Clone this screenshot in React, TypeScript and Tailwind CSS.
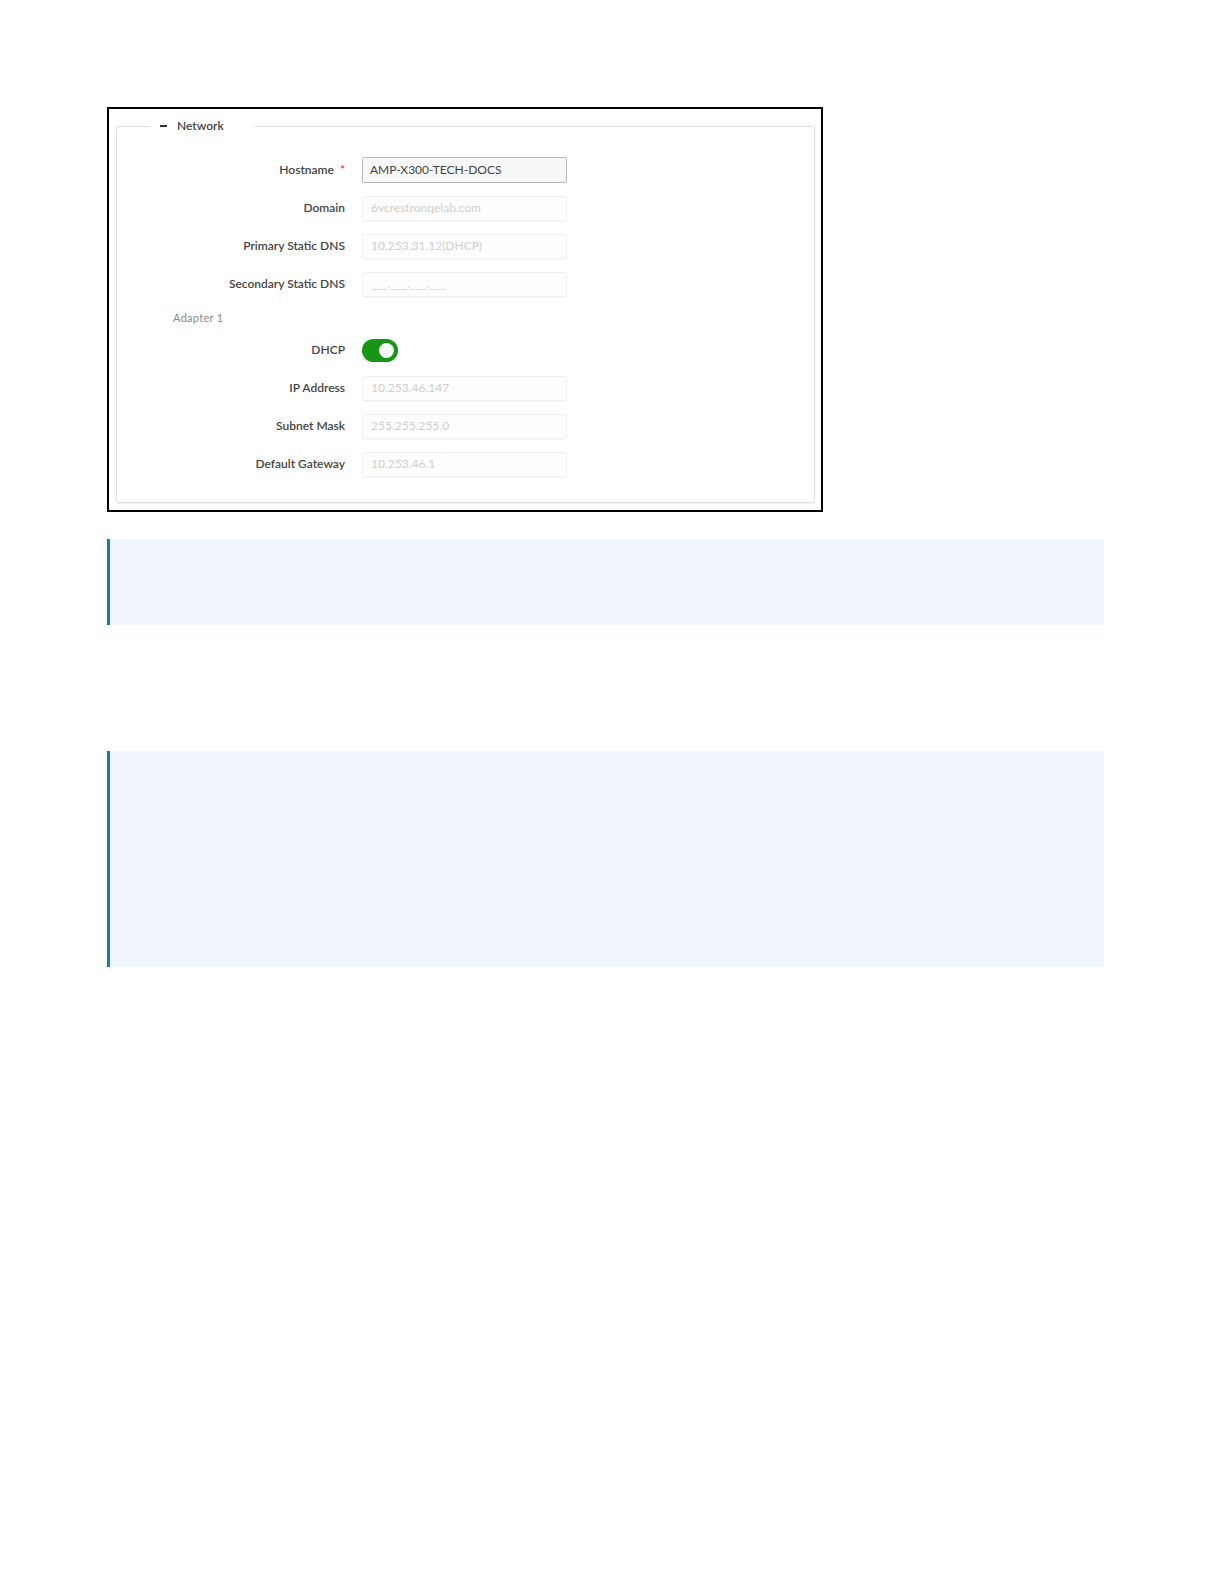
import React from 'react';

const fields = [
  { label: 'Domain', value: '6vcrestronqelab.com' },
  { label: 'Primary Static DNS', value: '10.253.31.12(DHCP)' },
  { label: 'Secondary Static DNS', value: '___.___.___.___' },
];

const adapterFields = [
  { label: 'IP Address', value: '10.253.46.147' },
  { label: 'Subnet Mask', value: '255.255.255.0' },
  { label: 'Default Gateway', value: '10.253.46.1' },
];

function Row({ label, children }: { label: React.ReactNode; children: React.ReactNode }) {
  return (
    <div className="flex items-center h-[26px]">
      <div className="w-[228px] text-right text-[12px] font-semibold text-[#444] leading-none">{label}</div>
      <div className="ml-[17px]">{children}</div>
    </div>
  );
}

function ReadOnlyInput({ value }: { value: string }) {
  return (
    <div className="w-[205px] h-[25px] border border-[#f0f0f0] bg-[#fdfdfd] rounded-[2px] px-[8px] flex items-center text-[12px] text-[#cfcfcf] shadow-[0_1px_1px_rgba(0,0,0,0.03)]">
      {value}
    </div>
  );
}

export default function App() {
  return (
    <div className="bg-white pt-[107px] pl-[107px] pb-[200px]" style={{ fontFamily: 'Lato, "Open Sans", sans-serif' }}>
      {/* Screenshot frame */}
      <div className="w-[716px] h-[405px] border-2 border-black pt-[8px] pl-[7px] pr-[6px]">
        <fieldset className="border border-[#dedede] rounded-[3px] pb-[25px] shadow-[0_1px_2px_rgba(0,0,0,0.06)]">
          <legend className="ml-[33px] pl-[10px] pr-[31px] text-[12px] font-semibold text-[#444] leading-[18px]">
            <span className="inline-block w-[7px] h-[2px] bg-[#333] align-middle mr-[10px] mb-[1px]" />
            Network
          </legend>
          <div className="flex flex-col gap-[12px] pt-[22px]">
            <Row
              label={
                <>
                  Hostname <span className="text-[#e23b3b] ml-[3px]">*</span>
                </>
              }
            >
              <div className="w-[205px] h-[26px] border border-[#b9b9b9] bg-[#f8f8f8] rounded-[2px] px-[7px] flex items-center text-[12px] text-[#444]">
                AMP-X300-TECH-DOCS
              </div>
            </Row>
            {fields.map((f) => (
              <Row key={f.label} label={f.label}>
                <ReadOnlyInput value={f.value} />
              </Row>
            ))}
            <div className="pl-[56px] mt-[2px] text-[11px] text-[#888] tracking-[0.3px] leading-[14px]">Adapter 1</div>
            <Row label="DHCP">
              <div className="w-[36px] h-[23px] rounded-full bg-[#169616] flex items-center justify-end pr-[4px]">
                <div className="w-[15px] h-[15px] rounded-full bg-white" />
              </div>
            </Row>
            {adapterFields.map((f) => (
              <Row key={f.label} label={f.label}>
                <ReadOnlyInput value={f.value} />
              </Row>
            ))}
          </div>
        </fieldset>
      </div>

      {/* Note callouts */}
      <div className="mt-[27px] w-[997px] h-[86px] bg-[#f0f6fc] border-l-[3px] border-[#0c82a6]" />
      <div className="mt-[126px] w-[997px] h-[216px] bg-[#f0f6fc] border-l-[3px] border-[#0c82a6]" />
    </div>
  );
}
